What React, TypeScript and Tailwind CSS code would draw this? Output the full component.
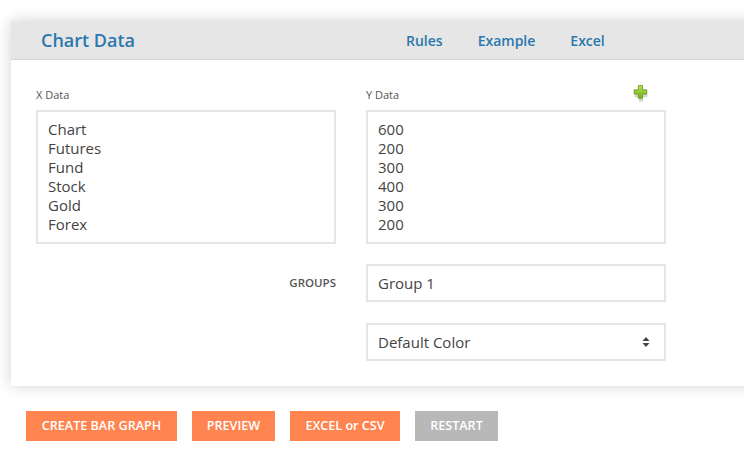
import React from 'react';

const xData = 'Chart\nFutures\nFund\nStock\nGold\nForex';
const yData = '600\n200\n300\n400\n300\n200';

const PlusIcon = () => (
  <svg width="19" height="19" viewBox="0 0 18 18">
    <defs>
      <linearGradient id="plusG" x1="0" y1="0" x2="0" y2="1">
        <stop offset="0" stopColor="#b5e04e" />
        <stop offset="1" stopColor="#74b21c" />
      </linearGradient>
    </defs>
    <path d="M6 3h4v4h4v4h-4v4H6v-4H2V7h4z" fill="#9a9a9a" opacity="0.45" transform="translate(0.5 1.5)" />
    <path d="M6 1.5h4v4h4v4h-4v4H6v-4H2v-4h4z" fill="url(#plusG)" stroke="#6c9c22" strokeWidth="0.8" />
  </svg>
);

const SortArrows = () => (
  <svg width="8" height="12" viewBox="0 0 8 12">
    <path d="M4 1L7.5 5h-7z" fill="#444" />
    <path d="M4 11L7.5 7h-7z" fill="#444" />
  </svg>
);

const buttons = [
  { label: 'CREATE BAR GRAPH', cls: 'w-[151px] bg-[#ff844f]' },
  { label: 'PREVIEW', cls: 'w-[83px] bg-[#ff844f]' },
  { label: 'EXCEL or CSV', cls: 'w-[110px] bg-[#ff844f]' },
  { label: 'RESTART', cls: 'w-[83px] bg-[#b8b8b8]' },
];

export default function App() {
  return (
    <div className="w-[744px] h-[465px] overflow-hidden bg-white text-[#444] font-['Open_Sans',sans-serif]">
      {/* Card */}
      <div className="ml-[11px] mt-[21px] w-[780px] bg-white shadow-[0_0_14px_rgba(0,0,0,0.18)]">
        <div className="h-[39px] bg-[#e6e6e6] border-b border-[#d2d2d2] flex items-center">
          <div className="w-[395px] pl-[30px] text-[18px] font-semibold text-[#2a78ad]">Chart Data</div>
          <nav className="flex gap-[35px] text-[14px] font-semibold text-[#2a78ad]">
            <a href="#">Rules</a>
            <a href="#">Example</a>
            <a href="#">Excel</a>
          </nav>
        </div>

        <div className="pl-[25px] pt-[27px] pb-[25px]">
          <div className="flex gap-[30px]">
            <div className="w-[300px]">
              <div className="h-[16px] mb-[7px] text-[11px] leading-[16px] text-[#555]">X Data</div>
              <textarea
                readOnly
                defaultValue={xData}
                className="block w-[300px] h-[134px] resize-none border-2 border-[#e5e5e5] px-[10px] pt-[8px] text-[15px] leading-[19px] text-[#444] outline-none overflow-hidden"
              />
            </div>
            <div className="w-[300px]">
              <div className="h-[16px] mb-[7px] flex items-start justify-between pr-[15px] text-[11px] leading-[16px] text-[#555]">
                <span>Y Data</span>
                <span className="-mt-[3px]"><PlusIcon /></span>
              </div>
              <textarea
                readOnly
                defaultValue={yData}
                className="block w-[300px] h-[134px] resize-none border-2 border-[#e5e5e5] px-[10px] pt-[8px] text-[15px] leading-[19px] text-[#444] outline-none overflow-hidden"
              />
            </div>
          </div>

          <div className="flex gap-[30px] mt-[20px]">
            <div className="w-[300px] pt-[10px] text-right text-[11.5px] font-semibold text-[#555]">GROUPS</div>
            <div className="w-[300px] h-[38px] border-2 border-[#e5e5e5] flex items-center px-[10px] text-[15px]">Group 1</div>
          </div>

          <div className="flex gap-[30px] mt-[21px]">
            <div className="w-[300px]" />
            <div className="w-[300px] h-[38px] border-2 border-[#e5e5e5] flex items-center justify-between pl-[10px] pr-[14px] text-[15px]">
              <span>Default Color</span>
              <SortArrows />
            </div>
          </div>
        </div>
      </div>

      <div className="flex gap-[15px] ml-[26px] mt-[25px]">
        {buttons.map((b) => (
          <button
            key={b.label}
            className={`h-[30px] flex items-center justify-center text-[12.6px] font-semibold text-white ${b.cls}`}
          >
            {b.label}
          </button>
        ))}
      </div>
    </div>
  );
}
